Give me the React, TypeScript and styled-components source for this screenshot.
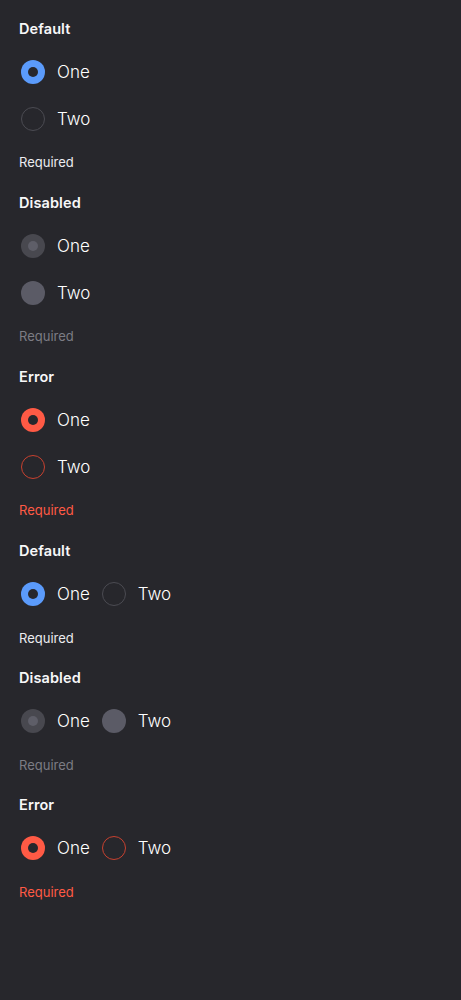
import React from "react";
import styled, { createGlobalStyle, css } from "styled-components";

const Global = createGlobalStyle`
  html, body { margin: 0; padding: 0; background: #27272c; }
  body { font-family: Inter, "Noto Sans", sans-serif; color: #f4f4f6; }
  #root { min-height: 1000px; background: #27272c; }
`;

type Variant = "default" | "disabled" | "error";

const Page = styled.div`
  padding: 18px 19px 0 19px;
  display: flex;
  flex-direction: column;
`;

const Group = styled.fieldset<{ $row?: boolean }>`
  border: 0;
  margin: 0;
  padding: 0;
  display: flex;
  flex-direction: column;
  min-width: 0;
  padding-bottom: ${(p) => (p.$row ? "21px" : "22px")};
`;

const Legend = styled.div`
  font-size: 14.5px;
  font-weight: 600;
  line-height: 20px;
  color: #f7f7f9;
  letter-spacing: 0.1px;
  padding-top: 1px;
  margin-bottom: -1px;
`;

const Options = styled.div<{ $row?: boolean }>`
  display: flex;
  flex-direction: ${(p) => (p.$row ? "row" : "column")};
  gap: ${(p) => (p.$row ? "10px" : "23px")};
  padding: 22px 0 ${(p) => (p.$row ? "24px" : "23px")};
`;

const Option = styled.label`
  display: flex;
  align-items: center;
  gap: 12px;
  height: 24px;
  padding-left: 2px;
`;

const Circle = styled.span<{ $variant: Variant; $checked: boolean }>`
  box-sizing: border-box;
  width: 24px;
  height: 24px;
  border-radius: 50%;
  display: flex;
  align-items: center;
  justify-content: center;
  ${(p) => {
    if (p.$variant === "default") {
      return p.$checked
        ? css`background: #5b9bfb;`
        : css`border: 1px solid #4b4b52;`;
    }
    if (p.$variant === "disabled") {
      return p.$checked
        ? css`background: #48484f;`
        : css`background: #5b5b66;`;
    }
    return p.$checked
      ? css`background: #ff5a45;`
      : css`border: 1px solid #c8412f;`;
  }}
`;

const Dot = styled.span<{ $variant: Variant }>`
  width: 10px;
  height: 10px;
  border-radius: 50%;
  background: ${(p) => (p.$variant === "disabled" ? "#5e5e68" : "#27272c")};
`;

const Label = styled.span`
  font-size: 17px;
  font-weight: 300;
  color: #ffffff;
  line-height: 24px;
`;

const Helper = styled.div<{ $variant: Variant }>`
  font-size: 13px;
  line-height: 16px;
  color: ${(p) =>
    p.$variant === "error" ? "#ff5a45" : p.$variant === "disabled" ? "#7c7c84" : "#ececf0"};
`;

const titles: Record<Variant, string> = {
  default: "Default",
  disabled: "Disabled",
  error: "Error",
};

function RadioGroup({ variant, row }: { variant: Variant; row?: boolean }) {
  return (
    <Group $row={row}>
      <Legend>{titles[variant]}</Legend>
      <Options $row={row}>
        {["One", "Two"].map((t, i) => (
          <Option key={t}>
            <Circle $variant={variant} $checked={i === 0}>
              {i === 0 && <Dot $variant={variant} />}
            </Circle>
            <Label>{t}</Label>
          </Option>
        ))}
      </Options>
      <Helper $variant={variant}>Required</Helper>
    </Group>
  );
}

export default function App() {
  return (
    <>
      <Global />
      <Page>
        <RadioGroup variant="default" />
        <RadioGroup variant="disabled" />
        <RadioGroup variant="error" />
        <RadioGroup variant="default" row />
        <RadioGroup variant="disabled" row />
        <RadioGroup variant="error" row />
      </Page>
    </>
  );
}
